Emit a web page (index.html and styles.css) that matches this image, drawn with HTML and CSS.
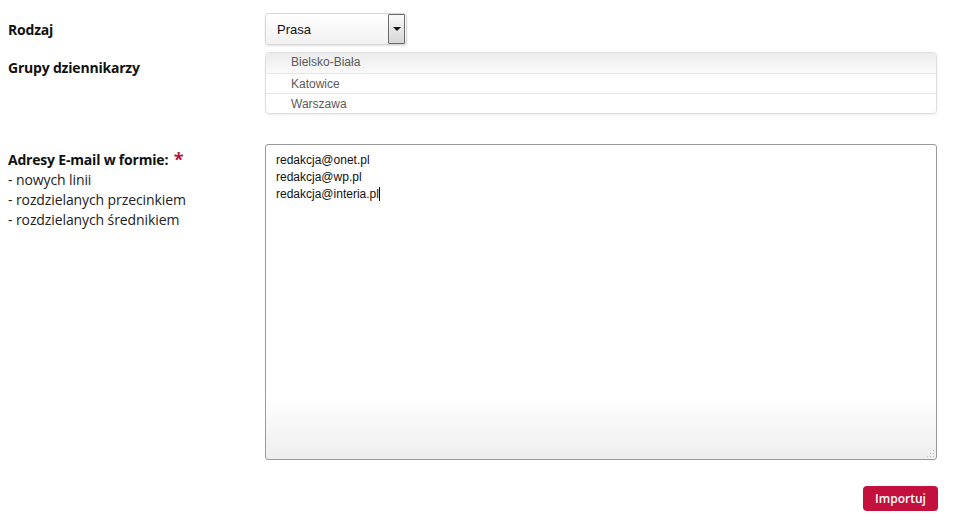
FILE: index.html
```html
<!DOCTYPE html>
<html lang="pl">
<head>
<meta charset="utf-8">
<link rel="stylesheet" href="styles.css">
</head>
<body>
<form class="form">
  <div class="row row-type">
    <label class="label">Rodzaj</label>
    <div class="field">
      <div class="select">
        <span class="select-value">Prasa</span>
        <span class="select-btn"><span class="tri"></span></span>
      </div>
    </div>
  </div>
  <div class="row row-groups">
    <label class="label label-top">Grupy dziennikarzy</label>
    <div class="field">
      <ul class="list">
        <li class="list-item first">Bielsko-Biała</li>
        <li class="list-item">Katowice</li>
        <li class="list-item">Warszawa</li>
      </ul>
    </div>
  </div>
  <div class="row row-emails">
    <div class="label label-top label-multi">
      <div class="label-title">Adresy E-mail w formie: <span class="req">*</span></div>
      <div class="label-note">- nowych linii</div>
      <div class="label-note">- rozdzielanych przecinkiem</div>
      <div class="label-note">- rozdzielanych średnikiem</div>
    </div>
    <div class="field">
      <div class="textarea">
        <div class="ta-line">redakcja@onet.pl</div>
        <div class="ta-line">redakcja@wp.pl</div>
        <div class="ta-line">redakcja@interia.pl<span class="caret"></span></div>
        <span class="grip"></span>
      </div>
    </div>
  </div>
  <div class="actions">
    <button type="button" class="btn">Importuj</button>
  </div>
</form>
</body>
</html>
```
FILE: styles.css
```css
* { box-sizing: border-box; }
html, body { margin: 0; padding: 0; background: #fff; }
body { font-family: "Open Sans", "Liberation Sans", sans-serif; color: #111; }

.form { padding: 13px 17px 0 8px; width: 954px; }

.row { display: grid; grid-template-columns: 257px 1fr; }
.row-type { align-items: center; }
.row-type .label { padding-top: 2px; }
.row-groups { margin-top: 7px; }
.row-emails { margin-top: 30px; }

.label { font-size: 14px; font-weight: 700; line-height: 20px; color: #111; letter-spacing: -0.2px; }
.label-top { padding-top: 6px; }
.label-multi { font-weight: 400; }
.label-title { font-weight: 700; }
.label-note { font-weight: 400; color: #222; letter-spacing: -0.1px; }
.req { color: #b5123a; font-size: 18px; line-height: 14px; vertical-align: -1px; margin-left: 2px; }

.select {
  width: 142px; height: 32px;
  display: flex; align-items: center; justify-content: space-between;
  border: 1px solid #d8d8d8; border-radius: 3px;
  background: linear-gradient(#fff, #f2f2f2);
  box-shadow: 0 1px 2px rgba(0,0,0,0.12);
  padding: 0 1px 0 11px;
  font-family: "Liberation Sans", Arial, sans-serif; font-size: 13px; color: #111;
}
.select-btn {
  width: 17px; height: 30px;
  border: 1px solid #6a6a6a; border-radius: 1px;
  background: linear-gradient(#fafafa, #d6d6d6);
  display: flex; align-items: center; justify-content: center;
}
.tri { width: 0; height: 0; border-left: 4px solid transparent; border-right: 4px solid transparent; border-top: 4px solid #111; }

.list {
  list-style: none; margin: 0; padding: 0;
  border: 1px solid #dedede; border-radius: 4px;
  box-shadow: 0 1px 2px rgba(0,0,0,0.08);
  font-family: "Liberation Sans", Arial, sans-serif; font-size: 12px; color: #5a5a5a;
  overflow: hidden;
}
.list-item { height: 20px; line-height: 20px; padding-left: 25px; border-top: 1px solid #e6e6e6; }
.list-item.first { border-top: 0; line-height: 19px; background: linear-gradient(#ececec, #fafafa); }

.textarea {
  position: relative;
  height: 316px;
  border: 1px solid #9a9a9a; border-radius: 3px;
  background: linear-gradient(#fff 0%, #fff 80%, #eeeeee 100%);
  padding: 7px 10px;
  font-family: "Liberation Sans", Arial, sans-serif; font-size: 12px; color: #111;
  line-height: 17px;
}
.caret { display: inline-block; width: 1px; height: 14px; background: #000; vertical-align: -3px; }
.grip {
  position: absolute; right: 2px; bottom: 2px; width: 8px; height: 8px;
  background: radial-gradient(circle, #bbb 0.8px, transparent 1px) 0 0 / 3px 3px;
  clip-path: polygon(100% 0, 100% 100%, 0 100%);
}

.actions { display: flex; justify-content: flex-end; margin-top: 26px; margin-right: -1px; }
.btn {
  width: 75px; height: 25px;
  border: 0; border-radius: 4px;
  background: #c4103c; color: #fff;
  font-family: "Open Sans", "Liberation Sans", sans-serif; font-size: 12px; font-weight: 600;
  padding: 0; cursor: pointer;
}
```
